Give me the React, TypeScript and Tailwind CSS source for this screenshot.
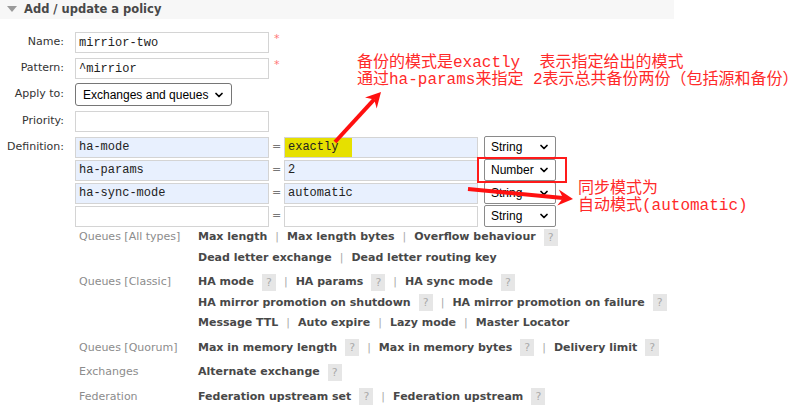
import { ChevronDown } from 'lucide-react';

const Help = () => (
  <span className="ml-[8px] inline-block w-[14px] h-[17px] bg-[#e6e6e6] text-[#aaa] text-[11px] leading-[17px] text-center font-normal align-middle">?</span>
);

const Sep = () => <span className="mx-[8px] text-[#aaa] font-normal">|</span>;

function FakeSelect({ label, width }: { label: string; width: string }) {
  return (
    <div className={`${width} h-full flex items-center justify-between pl-[6px] pr-[5px] bg-white border border-[#8a8a8a] rounded-[2px] text-[12px] text-black whitespace-nowrap font-['Liberation_Sans',sans-serif]`}>
      <span>{label}</span>
      <ChevronDown size={12} strokeWidth={3.5} className="text-black" />
    </div>
  );
}

const inputCls =
  "w-[194px] h-[21px] px-[3px] border border-[#d4d4d4] text-[12px] text-[#222] font-['Liberation_Mono',monospace] outline-none";

function DefRow({ k, v, type, filled, yellow }: { k: string; v: string; type: string; filled?: boolean; yellow?: boolean }) {
  const bg = filled ? 'bg-[#e8f0fe]' : 'bg-white';
  return (
    <div className="flex items-center h-[22px]">
      <input readOnly value={k} className={`${inputCls} ${bg}`} />
      <span className="w-[15px] text-center text-[#777] text-[11px]">=</span>
      <div className={`w-[194px] h-[21px] border border-[#d4d4d4] ${bg} flex items-center text-[12px] text-[#222] font-['Liberation_Mono',monospace]`}>
        {yellow ? (
          <span className="h-[19px] w-[67px] bg-[#e6e000] pl-[3px] leading-[19px]">{v}</span>
        ) : (
          <span className="pl-[3px]">{v}</span>
        )}
      </div>
      <div className="ml-[6px] h-[22px]">
        <FakeSelect label={type} width="w-[72px]" />
      </div>
    </div>
  );
}

function FormRow({ label, children, star, className = '' }: { label: string; children: React.ReactNode; star?: boolean; className?: string }) {
  return (
    <div className={`flex items-center ${className}`}>
      <span className="w-[64px] text-right text-[11px] text-[#333]">{label}</span>
      <div className="ml-[11px] flex items-start h-full">
        {children}
        {star && <span className="ml-[5px] text-[#f77] text-[11px] leading-[14px]">*</span>}
      </div>
    </div>
  );
}

const groups: { label: string; lines: React.ReactNode[] }[] = [
  {
    label: 'Queues [All types]',
    lines: [
      <>Max length<Sep />Max length bytes<Sep />Overflow behaviour<Help /></>,
      <>Dead letter exchange<Sep />Dead letter routing key</>,
    ],
  },
  {
    label: 'Queues [Classic]',
    lines: [
      <>HA mode<Help /><Sep />HA params<Help /><Sep />HA sync mode<Help /></>,
      <>HA mirror promotion on shutdown<Help /><Sep />HA mirror promotion on failure<Help /></>,
      <>Message TTL<Sep />Auto expire<Sep />Lazy mode<Sep />Master Locator</>,
    ],
  },
  {
    label: 'Queues [Quorum]',
    lines: [<>Max in memory length<Help /><Sep />Max in memory bytes<Help /><Sep />Delivery limit<Help /></>],
  },
  { label: 'Exchanges', lines: [<>Alternate exchange<Help /></>] },
  { label: 'Federation', lines: [<>Federation upstream set<Help /><Sep />Federation upstream<Help /></>] },
];

export default function App() {
  return (
    <div className="relative w-[805px] h-[414px] bg-white overflow-hidden font-['DejaVu_Sans',sans-serif]">
      <div className="w-[674px] h-[19px] bg-[#f7f7f7] flex items-center">
        <svg width="10" height="7" viewBox="0 0 10 7" className="ml-[7px]">
          <polygon points="0,0 10,0 5,6" fill="#9a9a9a" />
        </svg>
        <span className="ml-[7px] text-[11.5px] font-bold text-[#484848]">Add / update a policy</span>
      </div>

      <div className="mt-[13px] flex flex-col">
        <FormRow label="Name:" star className="h-[21px]">
          <input readOnly value="mirrior-two" className={`${inputCls} bg-white`} />
        </FormRow>
        <FormRow label="Pattern:" star className="h-[21px] mt-[5px]">
          <input readOnly value="^mirrior" className={`${inputCls} bg-white`} />
        </FormRow>
        <FormRow label="Apply to:" className="h-[23px] mt-[4px]">
          <div className="h-[23px] w-[157px] flex items-center justify-between pl-[7px] pr-[6px] bg-white border border-[#767676] rounded-[3px] text-[12px] text-black whitespace-nowrap font-['Liberation_Sans',sans-serif]">
            <span>Exchanges and queues</span>
            <ChevronDown size={12} strokeWidth={3.5} />
          </div>
        </FormRow>
        <FormRow label="Priority:" className="h-[21px] mt-[5px]">
          <input readOnly value="" className={`${inputCls} bg-white`} />
        </FormRow>
        <div className="flex items-start mt-[4px]">
          <span className="w-[64px] text-right text-[11px] text-[#333] leading-[22px]">Definition:</span>
          <div className="ml-[11px] flex flex-col gap-[1px]">
            <DefRow k="ha-mode" v="exactly" type="String" filled yellow />
            <DefRow k="ha-params" v="2" type="Number" filled />
            <DefRow k="ha-sync-mode" v="automatic" type="String" filled />
            <DefRow k="" v="" type="String" />
          </div>
        </div>

        <div className="ml-[79px] flex flex-col gap-[4px]">
          {groups.map((g) => (
            <div key={g.label} className="flex">
              <span className="w-[119px] text-[11px] leading-[20.5px] text-[#8c8c8c]">{g.label}</span>
              <div className="flex flex-col">
                {g.lines.map((l, i) => (
                  <div key={i} className="text-[11px] leading-[20.5px] font-bold text-[#484848] whitespace-nowrap">
                    {l}
                  </div>
                ))}
              </div>
            </div>
          ))}
        </div>
      </div>

      {/* annotations */}
      <div className="absolute left-[357px] top-[55px] text-[16px] leading-[17px] text-[#ff2a2a] whitespace-pre font-['Liberation_Mono','Noto_Sans_CJK_SC',monospace]">
        <div>备份的模式是exactly  表示指定给出的模式</div>
        <div>通过ha-params来指定 2表示总共备份两份（包括源和备份）</div>
      </div>
      <div className="absolute left-[578px] top-[181px] text-[16px] leading-[17px] text-[#ff2a2a] whitespace-pre font-['Liberation_Mono','Noto_Sans_CJK_SC',monospace]">
        <div>同步模式为</div>
        <div>自动模式(automatic)</div>
      </div>
      <svg className="absolute left-0 top-0 pointer-events-none" width="805" height="414">
        <rect x="478" y="158" width="88" height="24" fill="none" stroke="#ff1a1a" strokeWidth="2" />
        <line x1="335" y1="142" x2="374.2" y2="99.4" stroke="#ff1010" strokeWidth="4" />
        <polygon points="381,92 376.7,108.4 374.2,99.4 365,97.6" fill="#ff1010" />
        <line x1="468" y1="189" x2="563" y2="198" stroke="#ff1010" strokeWidth="4" />
        <polygon points="573,199 557.3,205.5 563,198 558.8,189.6" fill="#ff1010" />
      </svg>
    </div>
  );
}
